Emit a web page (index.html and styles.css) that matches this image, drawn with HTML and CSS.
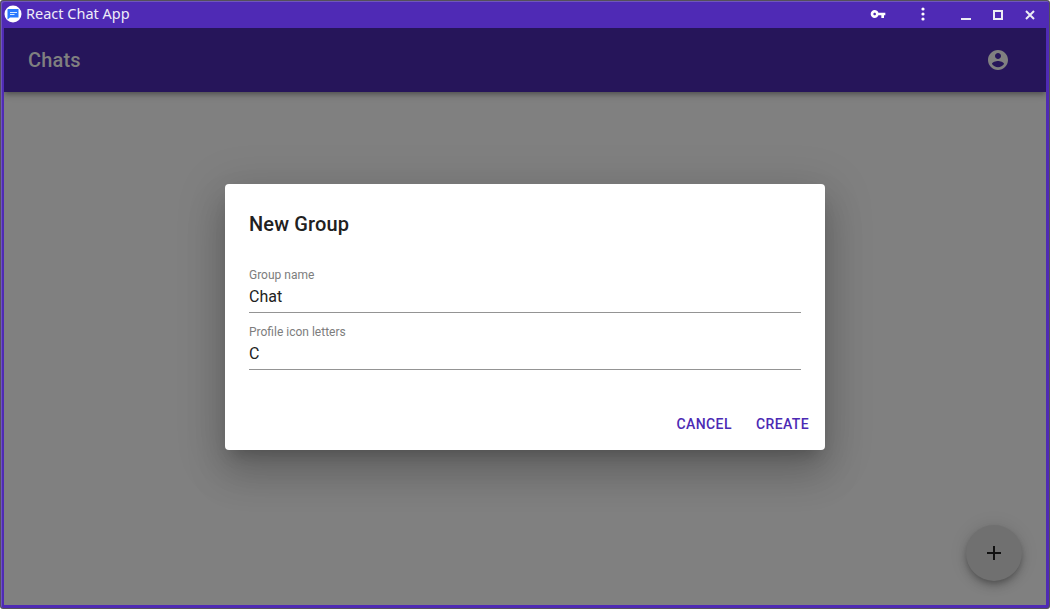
FILE: index.html
```html
<!DOCTYPE html>
<html lang="en">
<head>
<meta charset="utf-8">
<title>React Chat App</title>
<link rel="stylesheet" href="styles.css">
</head>
<body>
<div class="frame">
<div class="window">
  <header class="titlebar">
    <svg class="logo" width="18" height="18" viewBox="0 0 18 18"><circle cx="9" cy="9" r="8.500" fill="#fff"/><path d="M4 4h10.500v8.500H6L3.500 14.500V4.500z" fill="#2979ff"/><path d="M6 7.500h7M6 9.500h4.500" stroke="#d8eaff" stroke-width="1"/></svg>
    <span class="name">React Chat App</span>
    <svg class="key" width="16" height="16" viewBox="0 0 24 24" fill="#fff"><path d="M12.650 10C11.830 7.670 9.610 6 7 6c-3.310 0-6 2.690-6 6s2.690 6 6 6c2.610 0 4.830-1.670 5.650-4H17v4h4v-4h2v-4H12.650zM7 14c-1.100 0-2-.9-2-2s.9-2 2-2 2 .9 2 2-.9 2-2 2z"/></svg>
    <svg class="more" width="4" height="14" viewBox="0 0 4 14" fill="#fff"><circle cx="2" cy="2" r="1.600"/><circle cx="2" cy="7" r="1.600"/><circle cx="2" cy="12" r="1.600"/></svg>
    <svg class="controls" width="76" height="12" viewBox="0 0 76 12" fill="none" stroke="#ececf4" stroke-width="2"><path d="M0 10h10"/><path d="M33 2h8v8h-8z"/><path d="M65 2l8 8M73 2l-8 8"/></svg>
  </header>
  <main class="page">
    <div class="appbar">
      <h1 class="heading">Chats</h1>
      <svg width="24" height="24" viewBox="0 0 24 24" fill="#808080"><path d="M12 2C6.480 2 2 6.480 2 12s4.480 10 10 10 10-4.480 10-10S17.520 2 12 2zm0 3c1.660 0 3 1.340 3 3s-1.340 3-3 3-3-1.340-3-3 1.340-3 3-3zm0 14.200c-2.500 0-4.710-1.280-6-3.220.03-1.990 4-3.080 6-3.080 1.990 0 5.970 1.090 6 3.080-1.290 1.940-3.500 3.220-6 3.220z"/></svg>
    </div>
    <button class="fab" aria-label="Add"><svg width="24" height="24" viewBox="0 0 24 24" fill="#111"><path d="M19 13h-6v6h-2v-6H5v-2h6V5h2v6h6v2z"/></svg></button>
    <section class="dialog" role="dialog">
      <h2 class="dialog-title">New Group</h2>
      <label class="field"><span class="label">Group name</span><span class="value">Chat</span></label>
      <label class="field"><span class="label">Profile icon letters</span><span class="value">C</span></label>
      <div class="actions"><button class="action">CANCEL</button><button class="action">CREATE</button></div>
    </section>
  </main>
</div>
</div>
</body>
</html>
```
FILE: styles.css
```css
* { box-sizing: border-box; }
body { margin: 0; background: #fff; font-family: Roboto, sans-serif; overflow: hidden; }
button { border: 0; background: none; padding: 0; font-family: inherit; }
.frame { width: 1050px; height: 609px; padding: 1px; background: #55515a; border-radius: 3px; }
.window {
  width: 1048px; height: 607px; padding: 0 3px 3px;
  background: #4f2ab5; border-radius: 3px;
  box-shadow: inset 1px 1px 0 #6f55bf;
}
.titlebar { height: 27px; padding-bottom: 2px; display: flex; align-items: center; color: #eeecf8; }
.logo { margin: 1px 0 0 0; }
.name { width: 110px; margin: -1px 0 0 4px; font: 14.5px/20px "Noto Sans", sans-serif; white-space: nowrap; }
.key { margin: 1px 0 0 734px; }
.more { margin: 1px 0 0 34.500px; }
.controls { margin: 2px 0 0 36.500px; flex: none; }
.page { position: relative; height: 577px; background: #808080; overflow: hidden; }
.appbar {
  height: 64px; padding: 0 36px 0 24px; background: #26155a;
  display: flex; align-items: center; justify-content: space-between;
  box-shadow: 0 2px 4px -1px rgba(0,0,0,.2), 0 4px 5px rgba(0,0,0,.14), 0 1px 10px rgba(0,0,0,.12);
}
.heading { margin: 0; color: #808080; font-size: 20px; line-height: 32px; font-weight: 500; letter-spacing: .15px; }
.fab {
  position: absolute; right: 24px; bottom: 24px; width: 56px; height: 56px; border-radius: 50%;
  background: #707070; display: flex; align-items: center; justify-content: center;
  box-shadow: 0 3px 5px -1px rgba(0,0,0,.2), 0 6px 10px rgba(0,0,0,.14), 0 1px 18px rgba(0,0,0,.12);
}
.dialog {
  position: absolute; left: 221px; top: 156px; width: 600px; height: 266px;
  padding: 24px 24px 8px; background: #fff; border-radius: 4px; color: #212121;
  display: flex; flex-direction: column;
  box-shadow: 0 11px 15px -7px rgba(0,0,0,.2), 0 24px 38px 3px rgba(0,0,0,.14), 0 9px 46px 8px rgba(0,0,0,.12);
}
.dialog-title { margin: 0 0 25px; font-size: 20px; line-height: 32px; font-weight: 500; letter-spacing: .15px; }
.field { height: 48px; margin-bottom: 9px; padding-top: 2px; border-bottom: 1px solid #949494; display: flex; flex-direction: column; }
.label { height: 18px; font-size: 12px; line-height: 16px; color: #7d7d7d; }
.value { font-size: 16px; line-height: 24px; }
.actions { margin: auto -16px 0 0; display: flex; justify-content: flex-end; gap: 8px; }
.action { height: 36px; padding: 0 8px; color: #4c2ab4; font-size: 14px; line-height: 24px; font-weight: 500; letter-spacing: .4px; }
```
